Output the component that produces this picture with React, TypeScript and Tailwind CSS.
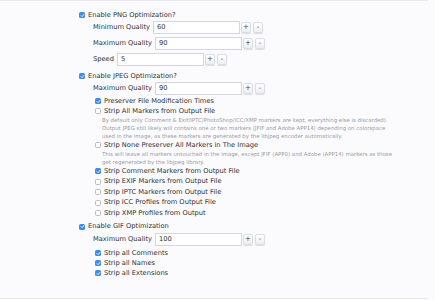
import React from 'react'

function Box({ checked }: { checked?: boolean }) {
  return checked ? (
    <span className="flex h-[6px] w-[6px] shrink-0 items-center justify-center rounded-[1.5px] bg-[#3d8ee6]">
      <svg viewBox="0 0 10 10" className="h-[5px] w-[5px]">
        <path d="M2 5.2 L4.2 7.4 L8 2.6" fill="none" stroke="#fff" strokeWidth="1.6" strokeLinecap="round" strokeLinejoin="round" />
      </svg>
    </span>
  ) : (
    <span className="h-[6px] w-[6px] shrink-0 rounded-[1.5px] border-[0.5px] border-[#b9bcc2] bg-white" />
  )
}

function Check({ label, checked, className = '' }: { label: string; checked?: boolean; className?: string }) {
  return (
    <div className={`flex h-[10px] items-center gap-[3px] ${className}`}>
      <Box checked={checked} />
      <span className="whitespace-nowrap">{label}</span>
    </div>
  )
}

function Btn({ children }: { children: React.ReactNode }) {
  return (
    <span className="flex h-[11px] w-[10px] items-center justify-center rounded-[2px] border-[0.5px] border-[#dcdde2] bg-gradient-to-b from-white to-[#eceef2] text-[7px] leading-none text-[#444] shadow-[0_1px_1px_rgba(0,0,0,0.12)]">
      {children}
    </span>
  )
}

function Field({ label, value, className = '' }: { label: string; value: string; className?: string }) {
  return (
    <div className={`flex h-[14px] items-center ${className}`}>
      <span className="whitespace-nowrap">{label}</span>
      <span className="ml-[3px] flex h-[13px] w-[87px] items-center border-[0.5px] border-[#d4d6db] bg-white pl-[3px]">{value}</span>
      <span className="ml-[1px] flex gap-[2px]">
        <Btn>+</Btn>
        <Btn>-</Btn>
      </span>
    </div>
  )
}

function Desc({ lines }: { lines: string[] }) {
  return (
    <div className="pl-[7px] text-[5.4px] text-[#9a9ca1]">
      {lines.map((l) => (
        <div key={l} className="h-[8px] leading-[8px] whitespace-nowrap">
          {l}
        </div>
      ))}
    </div>
  )
}

export default function App() {
  return (
    <div className="h-[300px] w-[435px] bg-[#fbfbfd] font-['DejaVu_Sans',sans-serif] text-[6.7px] text-[#2e2f33]">
      <div className="h-[299px] w-[428px] border-y border-[#e6eaf0] pl-[79px] pt-[9px]">
        <Check label="Enable PNG Optimization?" checked />
        <div className="pl-[14px]">
          <Field label="Minimum Quality" value="60" />
          <Field label="Maximum Quality" value="90" className="mt-[2px]" />
          <Field label="Speed" value="5" className="mt-[2px]" />
        </div>

        <Check label="Enable JPEG Optimization?" checked className="mt-[5px]" />
        <div className="pl-[14px]">
          <Field label="Maximum Quality" value="90" />
        </div>
        <div className="pl-[16px]">
          <Check label="Preserver File Modification Times" checked className="mt-[1px]" />
          <Check label="Strip All Markers from Output File" />
          <Desc
            lines={[
              'By default only Comment & Exif/IPTC/PhotoShop/ICC/XMP markers are kept, everything else is discarded).',
              'Output JPEG still likely will contains one or two markers (JFIF and Adobe APP14) depending on colorspace',
              'used in the image, as these markers are generated by the libjpeg encoder automatically.',
            ]}
          />
          <Check label="Strip None Preserver All Markers in The Image" />
          <Desc
            lines={[
              'This will leave all markers untouched in the image, except JFIF (APP0) and Adobe (APP14) markers as those',
              'get regenerated by the libjpeg library.',
            ]}
          />
          <Check label="Strip Comment Markers from Output File" checked />
          <Check label="Strip EXIF Markers from Output File" className="mt-[0.5px]" />
          <Check label="Strip IPTC Markers from Output File" className="mt-[0.5px]" />
          <Check label="Strip ICC Profiles from Output File" className="mt-[0.5px]" />
          <Check label="Strip XMP Profiles from Output" className="mt-[0.5px]" />
        </div>

        <Check label="Enable GIF Optimization" checked className="mt-[3.5px]" />
        <div className="pl-[14px]">
          <Field label="Maximum Quality" value="100" className="mt-[0.5px]" />
        </div>
        <div className="pl-[16px]">
          <Check label="Strip all Comments" checked className="mt-[2px]" />
          <Check label="Strip all Names" checked />
          <Check label="Strip all Extensions" checked />
        </div>
      </div>
    </div>
  )
}
